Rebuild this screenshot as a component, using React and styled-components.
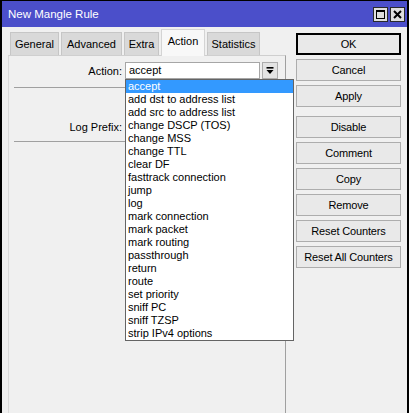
import React from 'react'
import styled, { createGlobalStyle } from 'styled-components'

const GlobalStyle = createGlobalStyle`
  html, body {
    margin: 0;
    padding: 0;
    background: #f0f0f0;
  }
  body {
    font-family: "Liberation Sans", Arial, sans-serif;
    font-size: 11px;
    color: #000;
  }
`

const Window = styled.div`
  width: 409px;
  height: 413px;
  box-sizing: border-box;
  border: 2px solid #000;
  border-top-width: 1px;
  border-bottom: none;
  background: #f0f0f0;
  display: flex;
  flex-direction: column;
  overflow: hidden;
`

const TitleBar = styled.div`
  height: 26px;
  flex: none;
  background: #4b4fca;
  display: flex;
  align-items: center;
  padding: 0 2px 0 6px;
`

const Title = styled.div`
  flex: 1;
  color: #fff;
  font-size: 11.5px;
  padding-bottom: 1px;
`

const TitleButtons = styled.div`
  display: flex;
  gap: 2px;
`

const TitleButton = styled.div`
  width: 15px;
  height: 15px;
  box-sizing: border-box;
  border: 1px solid #2a2a2a;
  background: #dedede;
  display: flex;
  align-items: center;
  justify-content: center;
`

const Main = styled.div`
  flex: 1;
  display: flex;
  min-height: 0;
`

const LeftPane = styled.div`
  width: 284px;
  box-sizing: border-box;
  padding: 2px 0 0 6px;
  display: flex;
  flex-direction: column;
`

const TabRow = styled.div`
  height: 26px;
  flex: none;
  display: flex;
  align-items: flex-end;
  padding-left: 2px;
`

const Tab = styled.div`
  position: relative;
  box-sizing: border-box;
  width: ${p => p.$width}px;
  height: ${p => (p.$active ? '27px' : '23px')};
  margin-bottom: ${p => (p.$active ? '-1px' : '0')};
  margin-right: 2px;
  padding-top: 5px;
  text-align: center;
  border: 1px solid ${p => (p.$active ? '#d4d4d4' : '#c6c6c6')};
  border-bottom: none;
  background: ${p => (p.$active ? '#f8f8f8' : '#d9d9d9')};
  z-index: ${p => (p.$active ? 2 : 1)};
  white-space: nowrap;
`

const Panel = styled.div`
  flex: 1;
  position: relative;
  border-top: 1px solid #cfcfcf;
  border-left: 1px solid #dadada;
  border-right: 1px solid #a0a0a0;
  padding-top: 6px;
`

const FieldRow = styled.div`
  display: grid;
  grid-template-columns: 113px 153px;
  column-gap: 3px;
  align-items: center;
  margin-top: ${p => p.$top || 0}px;
`

const Label = styled.div`
  text-align: right;
`

const Combo = styled.div`
  position: relative;
  display: flex;
  gap: 2px;
  height: 17px;
`

const Input = styled.div`
  flex: 1;
  box-sizing: border-box;
  height: 17px;
  background: #fff;
  border: 1px solid #a6a6a6;
  padding: 0 3px;
  line-height: 15px;
`

const ArrowButton = styled.div`
  width: 16px;
  height: 17px;
  box-sizing: border-box;
  border: 1px solid #adadad;
  background: #e4e4e4;
  display: flex;
  align-items: center;
  justify-content: center;
`

const Separator = styled.div`
  height: 1px;
  background: #a0a0a0;
  margin: ${p => p.$top}px 7px 0 5px;
`

const DropList = styled.div`
  position: absolute;
  top: 100%;
  left: 0;
  width: 169px;
  box-sizing: border-box;
  border: 1px solid #646464;
  background: #fff;
  z-index: 10;
`

const DropItem = styled.div`
  height: 13px;
  line-height: 13px;
  padding-left: 2px;
  white-space: nowrap;
  background: ${p => (p.$selected ? '#3399ff' : 'transparent')};
  color: ${p => (p.$selected ? '#fff' : '#000')};
`

const ButtonColumn = styled.div`
  padding: 6px 0 0 10px;
  display: flex;
  flex-direction: column;
  gap: 4px;
`

const Button = styled.div`
  width: 105px;
  height: 22px;
  box-sizing: border-box;
  border: 1px solid ${p => (p.$primary ? '#000' : '#adadad')};
  box-shadow: ${p => (p.$primary ? 'inset 0 0 0 1px #000' : 'none')};
  background: #e9e9e9;
  display: flex;
  align-items: center;
  justify-content: center;
  margin-top: ${p => p.$top || 0}px;
  white-space: nowrap;
  letter-spacing: -0.15px;
`

const actions = [
  'accept',
  'add dst to address list',
  'add src to address list',
  'change DSCP (TOS)',
  'change MSS',
  'change TTL',
  'clear DF',
  'fasttrack connection',
  'jump',
  'log',
  'mark connection',
  'mark packet',
  'mark routing',
  'passthrough',
  'return',
  'route',
  'set priority',
  'sniff PC',
  'sniff TZSP',
  'strip IPv4 options',
]

const tabs = [
  { name: 'General', width: 49 },
  { name: 'Advanced', width: 61 },
  { name: 'Extra', width: 35 },
  { name: 'Action', width: 44 },
  { name: 'Statistics', width: 53 },
]

function DropArrow () {
  return (
    <svg width="8" height="8" viewBox="0 0 8 8">
      <rect x="0.5" y="0" width="7" height="1.6" fill="#000" />
      <polygon points="0.5,3 7.5,3 4,7" fill="#000" />
    </svg>
  )
}

export default function App () {
  return (
    <>
      <GlobalStyle />
      <Window>
        <TitleBar>
          <Title>New Mangle Rule</Title>
          <TitleButtons>
            <TitleButton>
              <svg width="9" height="9" viewBox="0 0 9 9">
                <rect x="0.5" y="0.5" width="8" height="8" fill="none" stroke="#000" />
                <rect x="0" y="0" width="9" height="2" fill="#000" />
              </svg>
            </TitleButton>
            <TitleButton>
              <svg width="9" height="9" viewBox="0 0 9 9">
                <path d="M1 1 L8 8 M8 1 L1 8" stroke="#000" strokeWidth="2" />
              </svg>
            </TitleButton>
          </TitleButtons>
        </TitleBar>
        <Main>
          <LeftPane>
            <TabRow>
              {tabs.map(t => (
                <Tab key={t.name} $width={t.width} $active={t.name === 'Action'}>{t.name}</Tab>
              ))}
            </TabRow>
            <Panel>
              <FieldRow>
                <Label>Action:</Label>
                <Combo>
                  <Input>accept</Input>
                  <ArrowButton><DropArrow /></ArrowButton>
                  <DropList>
                    {actions.map((a, i) => (
                      <DropItem key={a} $selected={i === 0}>{a}</DropItem>
                    ))}
                  </DropList>
                </Combo>
              </FieldRow>
              <Separator $top={8} />
              <FieldRow $top={30}>
                <Label>Log Prefix:</Label>
                <Input />
              </FieldRow>
              <Separator $top={6} />
            </Panel>
          </LeftPane>
          <ButtonColumn>
            <Button $primary>OK</Button>
            <Button>Cancel</Button>
            <Button>Apply</Button>
            <Button $top={5}>Disable</Button>
            <Button>Comment</Button>
            <Button>Copy</Button>
            <Button>Remove</Button>
            <Button>Reset Counters</Button>
            <Button>Reset All Counters</Button>
          </ButtonColumn>
        </Main>
      </Window>
    </>
  )
}
